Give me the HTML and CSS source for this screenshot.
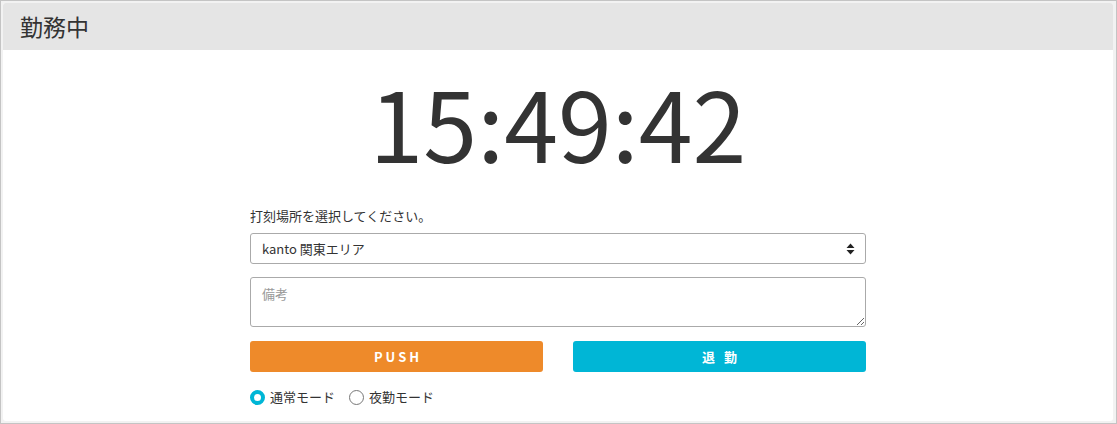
FILE: index.html
```html
<!DOCTYPE html>
<html lang="ja">
<head>
<meta charset="utf-8">
<link rel="stylesheet" href="styles.css">
</head>
<body>
<div class="frame">
  <div class="panel">
    <div class="panel-header">勤務中</div>
    <div class="panel-body">
      <div class="clock">15:49:42</div>
      <div class="form">
        <div class="label">打刻場所を選択してください。</div>
        <div class="select-wrap">
          <select class="select">
            <option>kanto 関東エリア</option>
          </select>
          <svg class="select-arrow" width="9" height="12" viewBox="0 0 9 12"><path d="M0.5 5 L4.5 0.5 L8.5 5 Z M0.5 7 L4.5 11.5 L8.5 7 Z" fill="#222"/></svg>
        </div>
        <textarea class="note" placeholder="備考"></textarea>
        <div class="buttons">
          <button class="btn btn-push">PUSH</button>
          <button class="btn btn-leave">退 勤</button>
        </div>
        <div class="modes">
          <label class="mode"><span class="radio checked"></span>通常モード</label>
          <label class="mode"><span class="radio"></span>夜勤モード</label>
        </div>
      </div>
    </div>
  </div>
</div>
</body>
</html>
```

FILE: styles.css
```css
* { box-sizing: border-box; }
html, body { margin: 0; padding: 0; }
body {
  width: 1117px;
  height: 424px;
  font-family: "Noto Sans CJK JP", "Noto Sans", sans-serif;
  color: #333;
  background: #f2f2f2;
}
.frame {
  height: 424px;
  border: 1px solid #c4c4c4;
  background: #f2f2f2;
  padding: 2px 3px 2px 2px;
}
.panel {
  height: 418px;
  background: #fff;
  border-radius: 3px;
  overflow: hidden;
  display: flex;
  flex-direction: column;
}
.panel-header {
  height: 47px;
  background: #e5e5e5;
  padding-left: 17px;
  font-size: 23px;
  line-height: 47px;
  color: #333;
}
.panel-body {
  padding-top: 22px;
  display: flex;
  flex-direction: column;
  align-items: center;
}
.clock {
  font-size: 97px;
  line-height: 97px;
  height: 97px;
  color: #333;
  letter-spacing: 0;
}
.form {
  width: 616px;
  margin-top: 37px;
  display: flex;
  flex-direction: column;
}
.label {
  font-size: 13px;
  line-height: 20px;
  height: 20px;
  color: #333;
}
.select-wrap {
  position: relative;
  margin-top: 7px;
  height: 31px;
}
.select {
  appearance: none;
  -webkit-appearance: none;
  width: 100%;
  height: 31px;
  border: 1px solid #aaa;
  border-radius: 3px;
  background: #fff;
  padding: 0 0 0 11px;
  font-family: "Noto Sans CJK JP", "Noto Sans", sans-serif;
  font-size: 13px;
  color: #333;
  outline: none;
}
.select-arrow {
  position: absolute;
  right: 11px;
  top: 10px;
}
.note {
  display: block;
  margin-top: 13px;
  width: 100%;
  height: 50px;
  border: 1px solid #aaa;
  border-radius: 3px;
  padding: 6px 11px;
  font-family: "Noto Sans CJK JP", "Noto Sans", sans-serif;
  font-size: 13px;
  color: #333;
  resize: vertical;
  outline: none;
}
.note::placeholder { color: #999; }
.buttons {
  margin-top: 14px;
  display: flex;
  gap: 30px;
}
.btn {
  flex: 1;
  height: 31px;
  border: none;
  border-radius: 3px;
  color: #fff;
  font-family: "Noto Sans CJK JP", "Noto Sans", sans-serif;
  font-size: 13px;
  font-weight: bold;
  letter-spacing: 3px;
  padding: 0 0 0 3px;
}
.btn-push { background: #ee8a2a; }
.btn-leave { background: #00b6d6; }
.modes {
  margin-top: 17px;
  display: flex;
  gap: 14px;
  font-size: 13px;
  line-height: 16px;
}
.mode {
  display: flex;
  align-items: center;
  gap: 5px;
}
.radio {
  width: 15px;
  height: 15px;
  border-radius: 50%;
  border: 1px solid #777;
  background: #fff;
}
.radio.checked {
  border: 4px solid #00b6d6;
}
```
